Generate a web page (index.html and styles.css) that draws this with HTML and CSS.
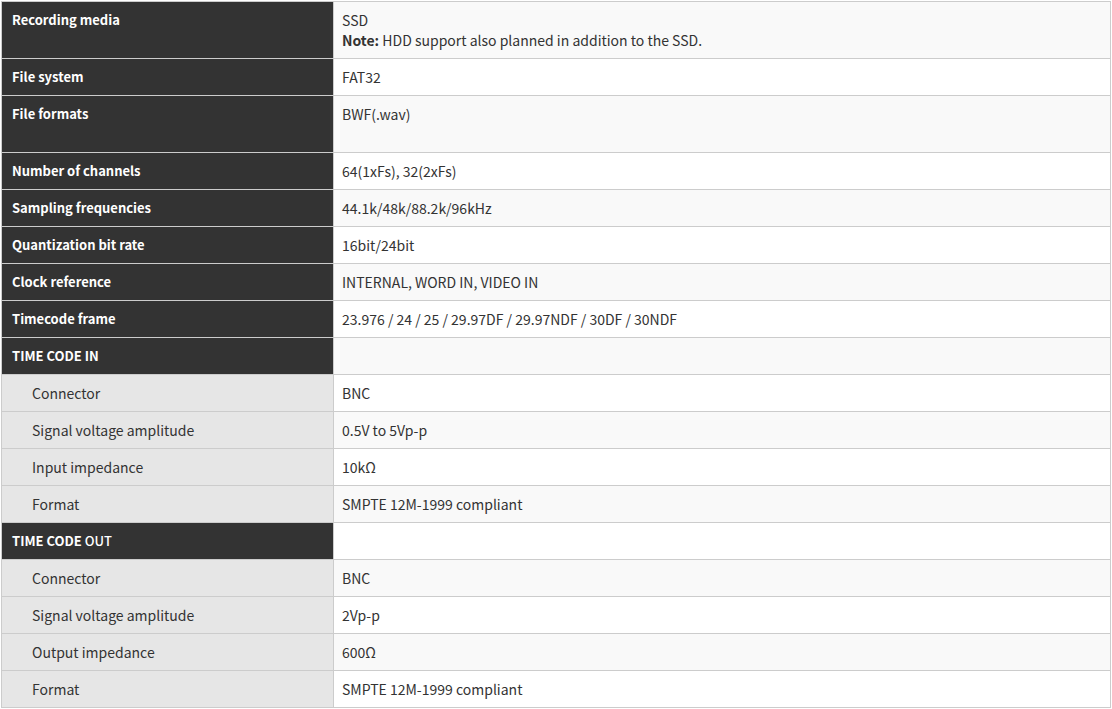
FILE: index.html
```html
<!DOCTYPE html>
<html lang="en">
<head>
<meta charset="utf-8">
<title>Specifications</title>
<link rel="stylesheet" href="styles.css">
</head>
<body>
<table class="spec">
  <colgroup><col class="c-key"><col class="c-val"></colgroup>
  <tbody>
    <tr><th class="key">Recording media</th><td class="val">SSD<br><strong>Note:</strong> HDD support also planned in addition to the SSD.</td></tr>
    <tr><th class="key">File system</th><td class="val">FAT32</td></tr>
    <tr><th class="key">File formats</th><td class="val">BWF(.wav)<br>&nbsp;</td></tr>
    <tr><th class="key">Number of channels</th><td class="val">64(1xFs), 32(2xFs)</td></tr>
    <tr><th class="key">Sampling frequencies</th><td class="val">44.1k/48k/88.2k/96kHz</td></tr>
    <tr><th class="key">Quantization bit rate</th><td class="val">16bit/24bit</td></tr>
    <tr><th class="key">Clock reference</th><td class="val">INTERNAL, WORD IN, VIDEO IN</td></tr>
    <tr><th class="key">Timecode frame</th><td class="val">23.976 / 24 / 25 / 29.97DF / 29.97NDF / 30DF / 30NDF</td></tr>
    <tr><th class="key">TIME CODE IN</th><td class="val"></td></tr>
    <tr><th class="sub">Connector</th><td class="val">BNC</td></tr>
    <tr><th class="sub">Signal voltage amplitude</th><td class="val">0.5V to 5Vp-p</td></tr>
    <tr><th class="sub">Input impedance</th><td class="val">10kΩ</td></tr>
    <tr><th class="sub">Format</th><td class="val">SMPTE 12M-1999 compliant</td></tr>
    <tr><th class="key">TIME CODE <span class="plain">OUT</span></th><td class="val"></td></tr>
    <tr><th class="sub">Connector</th><td class="val">BNC</td></tr>
    <tr><th class="sub">Signal voltage amplitude</th><td class="val">2Vp-p</td></tr>
    <tr><th class="sub">Output impedance</th><td class="val">600Ω</td></tr>
    <tr><th class="sub">Format</th><td class="val">SMPTE 12M-1999 compliant</td></tr>
  </tbody>
</table>
</body>
</html>
```
FILE: styles.css
```css
html, body {
  margin: 0;
  padding: 0;
  background: #ffffff;
}
body {
  font-family: "Noto Sans CJK JP", "Noto Sans", sans-serif;
  font-size: 14px;
  color: #333333;
}
.spec {
  margin: 1px 0 0 1px;
  width: 1110px;
  border-collapse: collapse;
  table-layout: fixed;
}
.c-key { width: 332px; }
.spec th,
.spec td {
  border: 1px solid #cccccc;
  padding: 8px 10px 8px 10px;
  line-height: 20px;
  vertical-align: top;
  text-align: left;
}
.key {
  background: #333333;
  color: #ffffff;
  font-weight: 700;
  font-size: 13px;
}
.plain {
  font-weight: 500;
}
.sub {
  background: #e6e6e6;
  color: #333333;
  font-weight: 400;
  font-size: 14px;
  padding-left: 30px !important;
}
.val {
  padding-left: 8px !important;
  background: #ffffff;
}
.spec tr:nth-child(odd) .val {
  background: #f9f9f9;
}
.val strong {
  font-weight: 700;
}
```
